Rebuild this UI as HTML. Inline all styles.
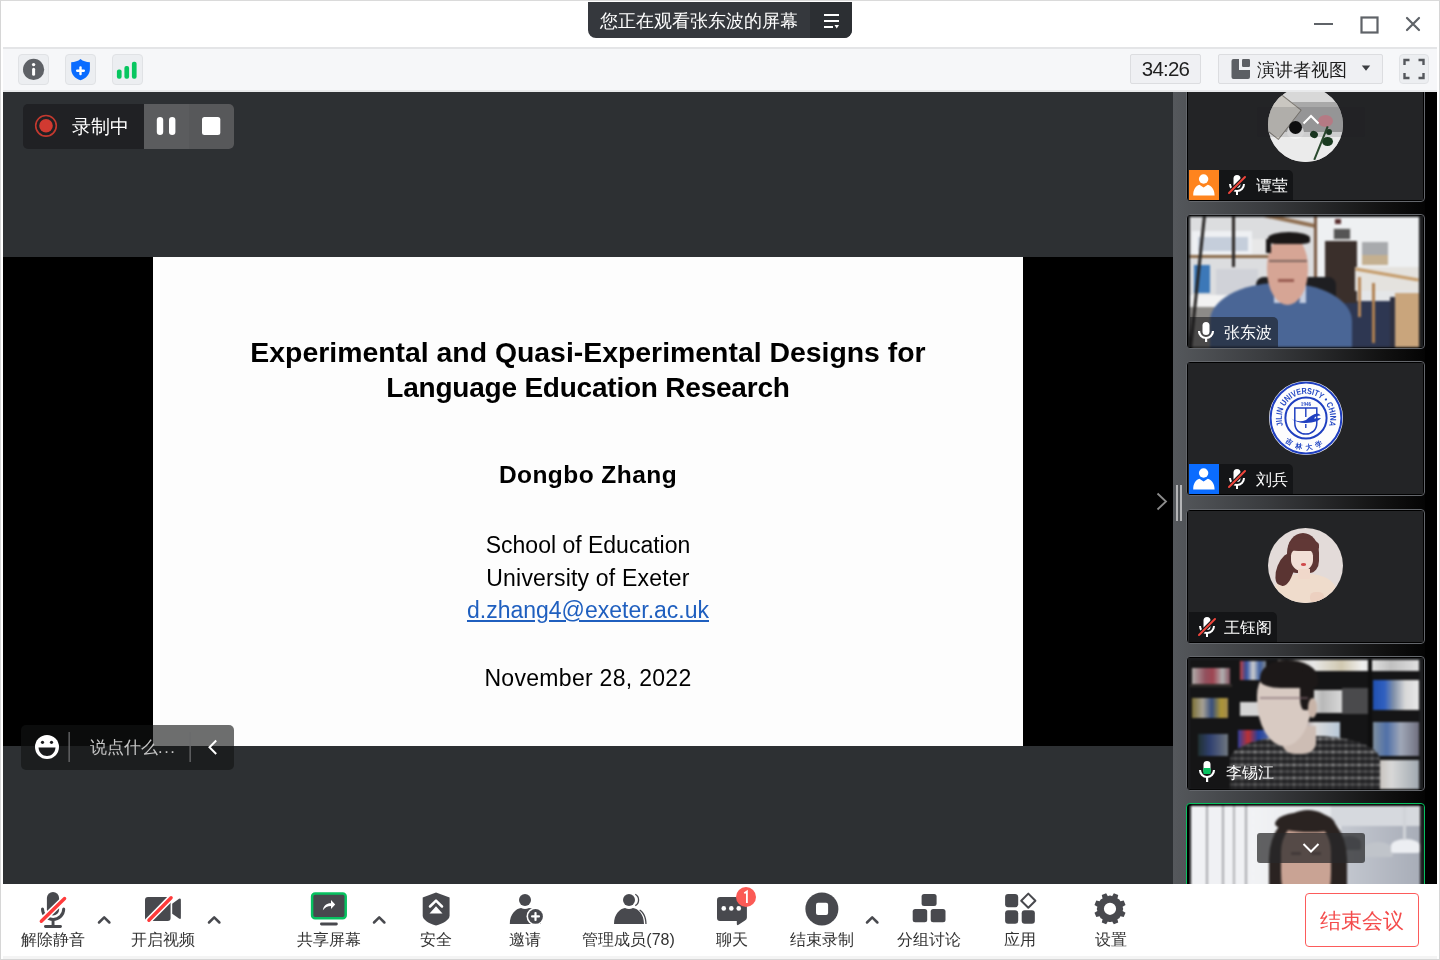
<!DOCTYPE html>
<html><head><meta charset="utf-8">
<style>
*{box-sizing:border-box;margin:0;padding:0}
html,body{width:1440px;height:960px;overflow:hidden;background:#fff;-webkit-font-smoothing:antialiased;font-family:"Liberation Sans",sans-serif}
.a{position:absolute}
#frame{position:absolute;left:0;top:0;width:1440px;height:960px;border:1px solid #d6d6d6;border-top-color:#dadada}
#titlebar{left:1px;top:1px;width:1438px;height:46px;background:#fff}
#pill{left:588px;top:2px;width:264px;height:36px;background:#35383d;border-radius:0 0 8px 8px;overflow:hidden}
#pill .txt{left:12px;top:8px;font-size:18px;color:#fff;line-height:22px;white-space:nowrap}
#pill .menu{left:222px;top:0;width:42px;height:36px;background:#2c2f33}
#sep1{left:3px;top:47px;width:1434px;height:2px;background:#e4e5e7}
#toolbar{left:3px;top:49px;width:1434px;height:42px;background:#f6f7f9}
#sep2{left:3px;top:90px;width:1434px;height:2px;background:#e8e9eb}
.tbtn{position:absolute;top:54px;width:31px;height:31px;background:#eceef1;border:1px solid #e0e2e5;border-radius:4px}
#main{left:3px;top:92px;width:1170px;height:792px;background:#2d3033}
#blackbar{left:3px;top:257px;width:1170px;height:489px;background:#000}
#slide{left:153px;top:257px;width:870px;height:489px;background:#fdfdfd;color:#000}
#slide .ln{position:absolute;left:0;width:870px;text-align:center;white-space:nowrap}
#sidebar{left:1173px;top:92px;width:264px;height:792px;background:linear-gradient(90deg,#55585c 0%,#3a3c3f 35%,#111 80%,#000 100%);overflow:hidden}
.tile{position:absolute;left:0;width:239px;height:135px;border:1px solid #64676c;border-radius:4px;background:#000;overflow:hidden}
.tile .in{position:absolute;left:1px;top:1px;width:235px;height:131px;background:#232426}
.vid{filter:blur(1.1px)}
.av{filter:blur(0.6px)}
.label{position:absolute;left:0;bottom:0;height:30px;background:#141517;border-radius:0 5px 0 0;color:#fff;font-size:16px;line-height:30px;white-space:nowrap}
#bottombar{left:3px;top:884px;width:1434px;height:72px;background:#fff}
#bsep{left:3px;top:956px;width:1434px;height:3px;background:#f4f4f4}
.blab{position:absolute;top:929.5px;font-size:16px;line-height:20px;color:#333;white-space:nowrap;text-align:center}
</style></head><body><div style="position:absolute;left:0;top:0;width:1440px;height:960px;will-change:transform">
<div id="frame"></div>
<div id="titlebar" class="a"></div>
<div id="pill" class="a">
  <div class="a txt">您正在观看张东波的屏幕</div>
  <div class="a menu">
    <svg class="a" style="left:0;top:0" width="42" height="36" viewBox="0 0 42 36">
      <rect x="14" y="12" width="15" height="2" fill="#fff"/>
      <rect x="14" y="18" width="15" height="2" fill="#fff"/>
      <rect x="14" y="24" width="9" height="2" fill="#fff"/>
      <path d="M24.5 23 L29 23 L26.75 26.5 Z" fill="#fff"/>
    </svg>
  </div>
</div>
<!-- window controls -->
<svg class="a" style="left:1310px;top:10px" width="120" height="30" viewBox="0 0 120 30">
  <rect x="4" y="13" width="19" height="2" fill="#5f6368"/>
  <rect x="51.5" y="7.5" width="16" height="15" fill="none" stroke="#5f6368" stroke-width="2.2"/>
  <path d="M97 8 L109 20 M109 8 L97 20" stroke="#5f6368" stroke-width="2.2" stroke-linecap="round"/>
</svg>
<div id="sep1" class="a"></div>
<div id="toolbar" class="a"></div>
<div id="sep2" class="a"></div>

<div class="tbtn" style="left:18px"></div>
<div class="tbtn" style="left:65px"></div>
<div class="tbtn" style="left:112px"></div>

<div id="main" class="a"></div>
<div id="blackbar" class="a"></div>
<div id="slide" class="a">
  <div class="ln" style="top:79px;font-size:28.4px;font-weight:bold">Experimental and Quasi-Experimental Designs for</div>
  <div class="ln" style="top:114.5px;font-size:28px;font-weight:bold;letter-spacing:-0.22px">Language Education Research</div>
  <div class="ln" style="top:203.5px;font-size:24.5px;font-weight:bold;letter-spacing:0.45px">Dongbo Zhang</div>
  <div class="ln" style="top:274.5px;font-size:23px">School of Education</div>
  <div class="ln" style="top:308px;font-size:23px;letter-spacing:0.2px">University of Exeter</div>
  <div class="ln" style="top:340px;font-size:23px;color:#1f5fbf;text-decoration:underline">d.zhang4@exeter.ac.uk</div>
  <div class="ln" style="top:408px;font-size:23px;letter-spacing:0.3px">November 28, 2022</div>
</div>



<!-- toolbar right -->
<div class="a" style="left:1130px;top:54px;width:71px;height:30px;background:#eff0f3;border:1px solid #dcdde0;border-radius:2px;font-size:20.5px;line-height:28px;text-align:center;color:#1f1f1f;letter-spacing:-0.8px">34:26</div>
<div class="a" style="left:1218px;top:54px;width:165px;height:30px;background:#eff0f3;border:1px solid #dcdde0;border-radius:2px"></div>
<svg class="a" style="left:1230px;top:58px" width="22" height="22" viewBox="0 0 22 22"><path d="M1.5 3 Q1.5 1 3.5 1 L9 1 L9 12 L20 12 L20 19 Q20 21 18 21 L3.5 21 Q1.5 21 1.5 19 Z" fill="#5c5f64"/><rect x="12" y="1" width="8" height="8" rx="1.2" fill="#5c5f64"/></svg>
<div class="a" style="left:1257px;top:57.5px;font-size:18.4px;line-height:24px;color:#1f1f1f;white-space:nowrap">演讲者视图</div>
<svg class="a" style="left:1360px;top:64px" width="12" height="8" viewBox="0 0 12 8"><path d="M1.8 1.5 L10.2 1.5 L6 6.8 Z" fill="#3c3e42"/></svg>
<div class="a" style="left:1399px;top:54px;width:30px;height:30px;background:#eceef1;border:1px solid #e0e2e5;border-radius:4px"></div>
<svg class="a" style="left:1399px;top:54px" width="30" height="30" viewBox="0 0 30 30"><path d="M5.5 11 L5.5 6 L10.5 6 M19.5 6 L24.5 6 L24.5 11 M24.5 19 L24.5 24 L19.5 24 M10.5 24 L5.5 24 L5.5 19" fill="none" stroke="#54575c" stroke-width="2.4"/></svg>
<!-- recording widget -->
<div class="a" style="left:23px;top:104px;width:211px;height:45px;border-radius:5px;overflow:hidden;background:#202124">
  <div class="a" style="left:121px;top:0;width:45px;height:45px;background:#5b5c5e"></div>
  <div class="a" style="left:166px;top:0;width:45px;height:45px;background:#57585a"></div>
  <svg class="a" style="left:0;top:0" width="211" height="45" viewBox="0 0 211 45">
    <circle cx="23" cy="21.8" r="10.3" fill="none" stroke="#c3392f" stroke-width="1.6"/>
    <circle cx="23" cy="21.8" r="6.8" fill="#d13a31"/>
    <rect x="133.8" y="12.9" width="6.4" height="18.1" rx="3.2" fill="#fff"/>
    <rect x="146" y="12.9" width="6.4" height="18.1" rx="3.2" fill="#fff"/>
    <rect x="179" y="13" width="18.3" height="18" rx="2.5" fill="#fff"/>
  </svg>
  <div class="a" style="left:49px;top:12px;font-size:18.8px;line-height:22px;color:#fff;white-space:nowrap">录制中</div>
</div>
<!-- chat input widget -->
<div class="a" style="left:21px;top:725px;width:213px;height:45px;border-radius:5px;background:rgba(18,19,20,.61)">
  <svg class="a" style="left:0;top:0" width="213" height="45" viewBox="0 0 213 45">
    <circle cx="26" cy="22" r="12" fill="#fff"/>
    <circle cx="21.5" cy="17.3" r="1.6" fill="#1a1b1d"/>
    <circle cx="30.5" cy="17.3" r="1.6" fill="#1a1b1d"/>
    <path d="M17.5 22.5 L34.5 22.5 C34 28 30.5 31 26 31 C21.5 31 18 28 17.5 22.5 Z" fill="#1a1b1d"/>
    <rect x="47.5" y="7" width="1.3" height="30" fill="#6a6b6d"/>
    <rect x="168.5" y="7" width="1.3" height="30" fill="#6a6b6d"/>
    <path d="M195.2 15.5 L188.5 22.3 L195.2 29" fill="none" stroke="#fff" stroke-width="2"/>
  </svg>
  <div class="a" style="left:69px;top:11px;font-size:16.5px;line-height:22px;color:#c6c6c6;white-space:nowrap">说点什么<span style="letter-spacing:1.6px">...</span></div>
</div>
<svg class="a" style="left:1150px;top:488px;z-index:2" width="22" height="26" viewBox="0 0 22 26"><path d="M7.5 5.5 L16 13.5 L7.5 21.5" fill="none" stroke="#8c8c8c" stroke-width="1.8"/></svg>
<div id="sidebar" class="a">
  <!-- splitter -->
  <div class="a" style="left:3px;top:393px;width:2px;height:36px;background:#b4b5b7"></div>
  <div class="a" style="left:7px;top:393px;width:2px;height:36px;background:#b4b5b7"></div>
  <!-- right scrollbar strip -->
  <div class="a" style="left:252px;top:0;width:12px;height:792px;background:#000"></div>
  </div>
<div id="tiles" class="a" style="left:1186px;top:0;width:239px;height:884px;overflow:hidden;clip-path:inset(92px 0 0 0)">
  <!-- tile1 -->
  <div class="tile" style="top:67px">
    <div class="in">
      <div class="a av" style="left:80px;top:18px;width:75px;height:75px;border-radius:50%;overflow:hidden;background:#d4d4d4">
        <div class="a" style="left:0;top:0;width:75px;height:15px;background:#d8d8d8"></div>
        <div class="a" style="left:0;top:15px;width:75px;height:30px;background:#a9a9a9"></div>
        <div class="a" style="left:0;top:45px;width:75px;height:30px;background:#ebebeb"></div>
        <div class="a" style="left:-10px;top:8px;width:36px;height:38px;background:#c9c6c0;transform:rotate(38deg);border:1px solid #7e7a74"></div>
        <div class="a" style="left:19px;top:38px;width:17px;height:14px;border-radius:50%;background:#f4f4f4"></div>
        <div class="a" style="left:21px;top:34px;width:13px;height:13px;border-radius:50%;background:#0c0c0c"></div>
        <div class="a" style="left:50px;top:28px;width:15px;height:12px;border-radius:50%;background:#cf8a94"></div>
        <div class="a" style="left:42px;top:44px;width:8px;height:7px;border-radius:50%;background:#1a3a20;transform:rotate(30deg)"></div>
        <div class="a" style="left:54px;top:50px;width:11px;height:9px;border-radius:50%;background:#1a3a20"></div>
        <div class="a" style="left:58px;top:42px;width:6px;height:6px;border-radius:50%;background:#1a3a20"></div>
        <div class="a" style="left:52px;top:38px;width:1.5px;height:36px;background:#2b4a2e;transform:rotate(22deg)"></div>
      </div>
    </div>
  </div>
  <!-- tile2 -->
  <div class="tile" style="top:214px">
    <div class="in" style="background:#1c1d1f">
      <div class="a vid" style="left:2px;top:1px;width:229px;height:130px;background:#e4e6e8;overflow:hidden">
        <div class="a" style="left:0;top:0;width:128px;height:130px;background:#dcdddf"></div>
        <div class="a" style="left:2px;top:14px;width:60px;height:26px;background:#eef0f3"></div>
        <div class="a" style="left:8px;top:20px;width:50px;height:14px;background:#c5cedb"></div>
        <div class="a" style="left:62px;top:22px;width:22px;height:16px;background:#e8e8e8"></div>
        <div class="a" style="left:0;top:38px;width:82px;height:3px;background:#8a6a4a"></div>
        <div class="a" style="left:38px;top:-2px;width:90px;height:4px;background:#8f6e50;transform:rotate(12deg)"></div>
        <div class="a" style="left:42px;top:0;width:3px;height:50px;background:#2a2624"></div>
        <div class="a" style="left:4px;top:48px;width:16px;height:28px;background:#3c78b8"></div>
        <div class="a" style="left:26px;top:52px;width:42px;height:30px;background:#d0d2d8"></div>
        <div class="a" style="left:0;top:78px;width:40px;height:14px;background:#f2f2f2"></div>
        <div class="a" style="left:0;top:90px;width:50px;height:40px;background:#8d8b88"></div>
        <div class="a" style="left:6px;top:0;width:3px;height:130px;background:#252322;transform:skewX(-6deg)"></div>
        <div class="a" style="left:126px;top:0;width:103px;height:62px;background:#eef0f2"></div>
        <div class="a" style="left:124px;top:0;width:3px;height:62px;background:#7a5a44"></div>
        <div class="a" style="left:130px;top:84px;width:75px;height:46px;background:#2e3752"></div>
        <div class="a" style="left:135px;top:24px;width:32px;height:62px;background:#3a2f2b"></div>
        <div class="a" style="left:143px;top:11px;width:18px;height:12px;background:#555;border:1px solid #ddd"></div>
        <div class="a" style="left:145px;top:2px;width:6px;height:5px;background:#5a3030"></div>
        <div class="a" style="left:172px;top:25px;width:26px;height:16px;background:#a8aaad"></div>
        <div class="a" style="left:172px;top:38px;width:26px;height:10px;background:#c4b090"></div>
        <div class="a" style="left:165px;top:50px;width:64px;height:24px;background:#e4e2de"></div>
        <div class="a" style="left:165px;top:56px;width:64px;height:3px;background:#c49a68;transform:rotate(10deg)"></div>
        <div class="a" style="left:168px;top:60px;width:3px;height:40px;background:#b8885a"></div>
        <div class="a" style="left:182px;top:66px;width:3px;height:60px;background:#b08050"></div>
        <div class="a" style="left:205px;top:76px;width:24px;height:54px;background:#c9a57c"></div>
        <div class="a" style="left:200px;top:80px;width:5px;height:50px;background:#2e3040"></div>
        <div class="a" style="left:66px;top:60px;width:80px;height:28px;background:#1e1e21;border-radius:8px"></div>
        <div class="a" style="left:20px;top:66px;width:142px;height:100px;background:#4a6696;border-radius:48% 48% 0 0 / 38% 38% 0 0"></div>
        <div class="a" style="left:84px;top:66px;width:32px;height:20px;background:#c4cde0"></div>
        <div class="a" style="left:90px;top:70px;width:20px;height:24px;background:#4a6696;border-radius:0 0 50% 50%"></div>
        <div class="a" style="left:77px;top:18px;width:41px;height:70px;background:#d6a595;border-radius:46% 46% 50% 50%"></div>
        <div class="a" style="left:78px;top:15px;width:42px;height:12px;background:#1a1717;border-radius:50% 50% 20% 20%"></div>
        <div class="a" style="left:76px;top:22px;width:5px;height:14px;background:#1a1717"></div>
        <div class="a" style="left:79px;top:43px;width:38px;height:2px;background:#5a4a48;opacity:.7"></div>
        <div class="a" style="left:88px;top:62px;width:16px;height:3px;background:#8a4a40;opacity:.8"></div>
      </div>
      <div class="label" style="left:2px;bottom:0;width:88px;background:rgba(20,20,22,.55)">
        <svg class="a" style="left:6px;top:4px" width="20" height="22" viewBox="0 0 20 22"><rect x="6.5" y="1" width="7" height="13" rx="3.5" fill="#fff"/><path d="M3 10 A7 7 0 0 0 17 10" fill="none" stroke="#fff" stroke-width="2.2"/><rect x="9" y="16" width="2.2" height="5" fill="#fff"/></svg>
        <span class="a" style="left:34px;top:1px">张东波</span>
      </div>
    </div>
  </div>
  <!-- tile3 -->
  <div class="tile" style="top:361px">
    <div class="in">
      <svg class="a" style="left:80px;top:17px" width="76" height="76" viewBox="0 0 76 76">
        <defs>
          <path id="arcT" d="M14.98 45.48 A24.2 24.2 0 1 1 61.02 45.48"/>
          <path id="arcB" d="M12.5 56 A31 31 0 0 0 63.5 56"/>
        </defs>
        <circle cx="38" cy="38" r="37" fill="#fdfdfd"/>
        <circle cx="38" cy="38" r="35.4" fill="none" stroke="#1f3fc0" stroke-width="2"/>
        <circle cx="38" cy="38" r="20.6" fill="none" stroke="#1f3fc0" stroke-width="2"/>
        <text font-family="Liberation Sans" font-weight="bold" font-size="8.6" fill="#2347c4"><textPath href="#arcT" textLength="91.2" lengthAdjust="spacingAndGlyphs">JILIN UNIVERSITY • CHINA</textPath></text>
        <text font-size="7" font-weight="bold" fill="#2347c4"><textPath href="#arcB" startOffset="50%" text-anchor="middle" letter-spacing="4">吉林大学</textPath></text>
        <text x="38" y="26" font-family="Liberation Serif" font-weight="bold" font-size="5.2" text-anchor="middle" fill="#2347c4">1946</text>
        <path d="M26.8 28 L48.8 28 L48.8 43 C48.8 50 44 54 37.8 54 C31.6 54 26.8 50 26.8 43 Z" fill="none" stroke="#1f3fc0" stroke-width="1.5"/>
        <path d="M37.8 28 L37.8 37 M37.8 44 L37.8 48" stroke="#1f3fc0" stroke-width="1.4"/>
        <path d="M23 38.5 C28 41.5 33 42 38 40 C42 36.5 45 34 49 33.5 C51 33.5 52 34.5 52.5 35.5 C49 35.5 47 36.5 46 38.5 L53 38 C51 41 46 42.5 38 43 C32 43.2 27 41.5 23 38.5 Z" fill="#1f3fc0"/>
      </svg>
      <div class="label" style="left:1px;width:104px">
        <div class="a" style="left:0;top:0;width:30px;height:30px;background:#0a6cff"></div>
        <svg class="a" style="left:0;top:0" width="30" height="30" viewBox="0 0 30 30"><circle cx="14.6" cy="9" r="4.7" fill="#fff"/><path d="M4.2 25.4 L25.6 25.4 C25.6 19.5 22.5 15.8 18.8 14.8 L14.6 17.6 L10.4 14.8 C6.8 15.8 4.2 19.5 4.2 25.4 Z" fill="#fff"/></svg>
        <svg class="a" style="left:37px;top:4px" width="22" height="22" viewBox="0 0 22 22"><rect x="7.5" y="1" width="7" height="13" rx="3.5" fill="#fff"/><path d="M4 10 A7 7 0 0 0 18 10" fill="none" stroke="#fff" stroke-width="2"/><rect x="10" y="16" width="2" height="5" fill="#fff"/><path d="M2.5 19.5 L19.5 2.5" stroke="#141517" stroke-width="4"/><path d="M3 19 L19 3" stroke="#f0453c" stroke-width="2" stroke-linecap="round"/></svg>
        <span class="a" style="left:67px;top:1px">刘兵</span>
      </div>
    </div>
  </div>
  <!-- tile4 -->
  <div class="tile" style="top:509px">
    <div class="in">
      <div class="a av" style="left:80px;top:17px;width:75px;height:75px;border-radius:50%;overflow:hidden;background:#e3dbd9">
        <div class="a" style="left:6px;top:46px;width:62px;height:40px;background:#efdccc;border-radius:45% 45% 0 0 / 40% 40% 0 0"></div>
        <div class="a" style="left:19px;top:5px;width:32px;height:40px;background:#5e3634;border-radius:50% 50% 30% 30%"></div>
        <div class="a" style="left:9px;top:24px;width:17px;height:34px;background:#5a3432;border-radius:60% 20% 40% 60%;transform:rotate(22deg)"></div>
        <div class="a" style="left:23px;top:21px;width:22px;height:22px;background:#f2dfd6;border-radius:30% 30% 50% 50%"></div>
        <div class="a" style="left:21px;top:11px;width:30px;height:12px;background:#613836;border-radius:40% 50% 30% 30%"></div>
        <div class="a" style="left:33px;top:35px;width:5px;height:2.5px;background:#d04a4c;border-radius:50%"></div>
        <div class="a" style="left:30px;top:41px;width:12px;height:10px;background:#f0d8ca"></div>
        <div class="a" style="left:42px;top:64px;width:14px;height:11px;background:#ecd0c0;border-radius:40%"></div>
      </div>
      <div class="label" style="left:1px;width:88px">
        <svg class="a" style="left:7px;top:4px" width="22" height="22" viewBox="0 0 22 22"><rect x="7.5" y="1" width="7" height="13" rx="3.5" fill="#fff"/><path d="M4 10 A7 7 0 0 0 18 10" fill="none" stroke="#fff" stroke-width="2"/><rect x="10" y="16" width="2" height="5" fill="#fff"/><path d="M2.5 19.5 L19.5 2.5" stroke="#141517" stroke-width="4"/><path d="M3 19 L19 3" stroke="#f0453c" stroke-width="2" stroke-linecap="round"/></svg>
        <span class="a" style="left:35px;top:1px">王钰阁</span>
      </div>
    </div>
  </div>
  <!-- tile5 -->
  <div class="tile" style="top:656px">
    <div class="in" style="background:#1c1d1f">
      <div class="a vid" style="left:2px;top:2px;width:229px;height:129px;background:#151516;overflow:hidden">
        <div class="a" style="left:2px;top:8px;width:38px;height:17px;opacity:.8;background:linear-gradient(90deg,#d8d4d0,#b06070 35%,#c05060 55%,#d8d8d8 80%,#a06070)"></div>
        <div class="a" style="left:0;top:24px;width:42px;height:3px;background:#302c2a"></div>
        <div class="a" style="left:50px;top:1px;width:26px;height:19px;background:linear-gradient(90deg,#c04040,#3050a0 25%,#d0d0d0 50%,#4060a0 75%,#808890)"></div>
        <div class="a" style="left:88px;top:0;width:141px;height:11px;background:linear-gradient(90deg,#b8b0a8,#e8e8e8 25%,#d0c8b0 45%,#f0f0f0 60%,#c0c0c0 80%,#e0e0e0)"></div>
        <div class="a" style="left:2px;top:38px;width:36px;height:20px;opacity:.75;background:linear-gradient(90deg,#a09040,#d8d0c0 30%,#4060a0 55%,#e0c040 80%,#d0b060)"></div>
        <div class="a" style="left:50px;top:42px;width:22px;height:14px;background:#d4d4d4"></div>
        <div class="a" style="left:48px;top:70px;width:34px;height:25px;background:linear-gradient(90deg,#3040a0,#c03030 30%,#2040a0 60%,#6070a0)"></div>
        <div class="a" style="left:8px;top:74px;width:30px;height:22px;background:linear-gradient(90deg,#203030,#304070 40%,#707880)"></div>
        <div class="a" style="left:102px;top:30px;width:50px;height:23px;background:linear-gradient(90deg,#e0e0e0,#f0f0f0 30%,#b8b8b8 60%,#d8d8d8)"></div>
        <div class="a" style="left:152px;top:28px;width:26px;height:26px;background:#4a4a4c"></div>
        <div class="a" style="left:183px;top:20px;width:46px;height:30px;background:linear-gradient(90deg,#2050b0,#3060c0 25%,#8090a8 45%,#d8d8d8 70%,#e8e8e8)"></div>
        <div class="a" style="left:108px;top:62px;width:42px;height:32px;background:linear-gradient(90deg,#907070,#dcdcdc 40%,#b8c8d8)"></div>
        <div class="a" style="left:183px;top:62px;width:46px;height:34px;background:linear-gradient(90deg,#8090a0,#5070a8 30%,#a0a8b8 60%,#707080)"></div>
        <div class="a" style="left:183px;top:100px;width:46px;height:29px;background:linear-gradient(90deg,#c0b8b0,#d8d8d8 40%,#a0a8b0)"></div>
        <div class="a" style="left:178px;top:0;width:4px;height:129px;background:#0e0e0e"></div>
        <div class="a" style="left:40px;top:76px;width:150px;height:80px;border-radius:45% 45% 0 0 / 30% 30% 0 0;background:repeating-linear-gradient(90deg,#262628 0 5px,#9a9a9a 5px 6.5px),#333"></div>
        <div class="a" style="left:40px;top:76px;width:150px;height:80px;border-radius:45% 45% 0 0 / 30% 30% 0 0;background:repeating-linear-gradient(0deg,rgba(38,38,40,.85) 0 5px,rgba(180,180,180,.45) 5px 6.5px)"></div>
        <div class="a" style="left:92px;top:66px;width:34px;height:28px;background:#cdbdb4;border-radius:0 0 40% 40%"></div>
        <div class="a" style="left:67px;top:8px;width:55px;height:78px;background:#d8cac2;border-radius:40% 46% 50% 50% / 35% 40% 60% 60%"></div>
        <div class="a" style="left:70px;top:0;width:58px;height:28px;background:#1c1818;border-radius:50% 60% 10% 40% / 70% 70% 20% 30%"></div>
        <div class="a" style="left:110px;top:10px;width:14px;height:40px;background:#1c1818;border-radius:30% 50% 30% 30%"></div>
        <div class="a" style="left:118px;top:38px;width:9px;height:20px;background:#c8b4a8;border-radius:50%"></div>
        <div class="a" style="left:70px;top:37px;width:48px;height:2px;background:#806870;opacity:.6"></div>
      </div>
      <div class="label" style="left:2px;bottom:2px;width:86px;background:transparent">
        <svg class="a" style="left:6px;top:3px" width="22" height="24" viewBox="0 0 22 24"><rect x="7.5" y="1" width="7" height="13" rx="3.5" fill="#fff"/><rect x="7.5" y="8" width="7" height="6" fill="#07c160"/><rect x="7.5" y="8" width="7" height="6" rx="3" fill="#07c160"/><path d="M4 10 A7 7 0 0 0 18 10" fill="none" stroke="#fff" stroke-width="2.2"/><rect x="10" y="17" width="2.2" height="5" fill="#fff"/></svg>
        <span class="a" style="left:36px;top:1px">李锡江</span>
      </div>
    </div>
  </div>
  <!-- tile6 -->
  <div class="tile" style="top:803px;border:1.5px solid #07c160">
    <div class="in" style="left:1.5px;top:1.5px;background:#1c1d1f">
      <div class="a vid" style="left:2px;top:0.5px;width:229px;height:129px;background:#e4e6ea;overflow:hidden">
        <div class="a" style="left:0;top:0;width:65px;height:129px;background:#f0f1f4"></div>
        <div class="a" style="left:15px;top:0;width:2px;height:129px;background:#a8a9ad"></div>
        <div class="a" style="left:31px;top:0;width:2px;height:129px;background:#a8a9ad"></div>
        <div class="a" style="left:42px;top:0;width:2px;height:129px;background:#b0b1b5"></div>
        <div class="a" style="left:54px;top:0;width:2px;height:129px;background:#a8a9ad"></div>
        <div class="a" style="left:60px;top:0;width:90px;height:129px;background:linear-gradient(90deg,#f2f3f5,#e4e6ea)"></div>
        <div class="a" style="left:140px;top:0;width:89px;height:20px;background:#d6d9de"></div>
        <div class="a" style="left:150px;top:20px;width:79px;height:109px;background:linear-gradient(90deg,#c4c8d0,#a8adb8)"></div>
        <div class="a" style="left:172px;top:36px;width:30px;height:15px;background:#c0c4ca;border-radius:50% 50% 10% 10%"></div>
        <div class="a" style="left:200px;top:33px;width:29px;height:14px;background:#eceef2;border-radius:50% 50% 10% 10%"></div>
        <div class="a" style="left:212px;top:0;width:3px;height:34px;background:#d0d3d8"></div>
        <div class="a" style="left:146px;top:30px;width:24px;height:14px;background:#8a8e96;border-radius:50% 50% 10% 10%"></div>
        <div class="a" style="left:78px;top:4px;width:78px;height:140px;background:#2a2321;border-radius:50% 50% 35% 35% / 35% 35% 30% 30%"></div>
        <div class="a" style="left:90px;top:16px;width:50px;height:100px;background:#c9a394;border-radius:45% 45% 45% 45% / 30% 30% 50% 50%"></div>
        <div class="a" style="left:84px;top:6px;width:60px;height:20px;background:#2a2321;border-radius:50% 50% 30% 60% / 60% 60% 40% 40%"></div>
        <div class="a" style="left:100px;top:46px;width:10px;height:3px;background:#5a4040;opacity:.6"></div>
        <div class="a" style="left:120px;top:46px;width:10px;height:3px;background:#5a4040;opacity:.6"></div>
      </div>
    </div>
  </div>
  <!-- scroll overlays -->
  <div class="a" style="left:71px;top:107px;width:108px;height:30px;background:rgba(30,30,32,.14);border-radius:3px"></div>
  <svg class="a" style="left:116px;top:114px" width="18" height="12" viewBox="0 0 18 12"><path d="M1.5 9.5 L9 2 L16.5 9.5" fill="none" stroke="#fff" stroke-width="2"/></svg>
  <div class="a" style="left:71px;top:833px;width:108px;height:30px;background:rgba(40,40,42,.72);border-radius:3px"></div>
  <svg class="a" style="left:116px;top:841px" width="18" height="14" viewBox="0 0 18 14"><path d="M1.5 3 L9 10.5 L16.5 3" fill="none" stroke="#fff" stroke-width="2"/></svg>
  <!-- tile1 label -->
  <div class="label" style="left:3px;top:170px;bottom:auto;width:104px">
    <div class="a" style="left:0;top:0;width:30px;height:30px;background:#fe841e"></div>
    <svg class="a" style="left:0;top:0" width="30" height="30" viewBox="0 0 30 30"><circle cx="14.6" cy="9" r="4.7" fill="#fff"/><path d="M4.2 25.4 L25.6 25.4 C25.6 19.5 22.5 15.8 18.8 14.8 L14.6 17.6 L10.4 14.8 C6.8 15.8 4.2 19.5 4.2 25.4 Z" fill="#fff"/></svg>
    <svg class="a" style="left:37px;top:4px" width="22" height="22" viewBox="0 0 22 22"><rect x="7.5" y="1" width="7" height="13" rx="3.5" fill="#fff"/><path d="M4 10 A7 7 0 0 0 18 10" fill="none" stroke="#fff" stroke-width="2"/><rect x="10" y="16" width="2" height="5" fill="#fff"/><path d="M2.5 19.5 L19.5 2.5" stroke="#141517" stroke-width="4"/><path d="M3 19 L19 3" stroke="#f0453c" stroke-width="2" stroke-linecap="round"/></svg>
    <span class="a" style="left:67px;top:1px">谭莹</span>
  </div>
</div>


<div id="bottombar" class="a"></div>
<div id="bsep" class="a"></div>

<svg class="a" style="left:0;top:0" width="1440" height="960" viewBox="0 0 1440 960">
  <!-- toolbar icons -->
  <circle cx="33.6" cy="69.4" r="10.6" fill="#5e6166"/>
  <circle cx="33.6" cy="64.6" r="1.7" fill="#fff"/>
  <rect x="32.1" y="67.8" width="3" height="8" rx="1.5" fill="#fff"/>
  <path d="M80.5 59 C78 61.2 75 62 71.2 62.2 L71.2 69 C71.2 74.5 75 78.5 80.5 80.3 C86 78.5 89.9 74.5 89.9 69 L89.9 62.2 C86 62 83 61.2 80.5 59 Z" fill="#0a6cff"/>
  <rect x="76" y="69.5" width="9" height="2.4" rx="1.1" fill="#fff"/>
  <rect x="79.3" y="66.3" width="2.4" height="9" rx="1.1" fill="#fff"/>
  <rect x="116.9" y="69.4" width="4.7" height="9.4" rx="2" fill="#07c65f"/>
  <rect x="124.4" y="66" width="4.7" height="12.8" rx="2" fill="#07c65f"/>
  <rect x="131.9" y="61.7" width="4.7" height="17.1" rx="2" fill="#07c65f"/>
  <!-- bottom bar icons -->
  <g fill="#48494e">
    <rect x="46.9" y="891.9" width="12.2" height="23.7" rx="6.1"/>
    <path d="M42.5 909 A10.6 10.4 0 0 0 63.7 909" fill="none" stroke="#48494e" stroke-width="3" stroke-linecap="round"/>
    <rect x="51.6" y="919" width="2.9" height="7"/>
    <rect x="44" y="925" width="17.9" height="2.9" rx="1.4"/>
  </g>
  <path d="M40.3 922.2 L65.6 897.5" stroke="#fff" stroke-width="6.5" stroke-linecap="round"/>
  <path d="M41.3 921.2 L64.6 898.5" stroke="#ff3b3b" stroke-width="3.4" stroke-linecap="round"/>
  <g fill="#48494e">
    <rect x="145" y="896.9" width="25.6" height="24" rx="3"/>
    <path d="M172.2 903.7 L179 898.8 Q180.9 897.8 180.9 900 L180.9 917.4 Q180.9 919.6 179 918.6 L172.2 913.8 Z"/>
  </g>
  <path d="M148.1 921 L171.9 896.9" stroke="#fff" stroke-width="6.5" stroke-linecap="round"/>
  <path d="M148.9 920.2 L171.1 897.7" stroke="#ff3b3b" stroke-width="3.4" stroke-linecap="round"/>
  <g fill="none" stroke="#48494e" stroke-width="2.5" stroke-linecap="round" stroke-linejoin="round">
    <path d="M99 922.5 L104.2 917.3 L109.4 922.5"/>
    <path d="M209 922.5 L214.2 917.3 L219.4 922.5"/>
    <path d="M374 922.5 L379.2 917.3 L384.4 922.5"/>
    <path d="M867 922.5 L872.2 917.3 L877.4 922.5"/>
  </g>
  <rect x="312.1" y="893.4" width="33.6" height="24.8" rx="3" fill="#48494e" stroke="#07c160" stroke-width="2.5"/>
  <rect x="320" y="922.5" width="17.8" height="2.9" rx="1.4" fill="#48494e"/>
  <path d="M322.8 910.3 C323.5 905.5 327 903 331 903.2 L331 900 L335.2 904.5 L331 909 L331 906 C327.5 906 325 907.5 322.8 910.3 Z" fill="#fff"/>
  <path d="M436 892.4 L449.6 897.4 L449.6 915.5 C449.6 920 443 923.5 436 925.5 C429 923.5 422.7 920 422.7 915.5 L422.7 897.4 Z" fill="#48494e"/>
  <path d="M430 906.5 L436 900.6 L442 906.5" fill="none" stroke="#fff" stroke-width="2.5" stroke-linecap="round" stroke-linejoin="round"/>
  <path d="M429.5 913.6 L436 906.3 L442.5 913.6 Z" fill="#fff"/>
  <g fill="#48494e">
    <circle cx="525" cy="900" r="6"/>
    <path d="M509.8 923.9 C509.8 914 516 908.5 521 908 Q525 909.8 529 908 C534 908.6 539 912 541 917 L541 923.9 Z"/>
  </g>
  <circle cx="535.5" cy="916.4" r="9" fill="#fff"/>
  <circle cx="535.5" cy="916.4" r="7.4" fill="#48494e"/>
  <rect x="531" y="915.3" width="9" height="2.2" rx="1" fill="#fff"/>
  <rect x="534.4" y="911.9" width="2.2" height="9" rx="1" fill="#fff"/>
  <g fill="#48494e">
    <path d="M635.3 894.2 A6.6 6.6 0 0 1 635.3 905.6" fill="none" stroke="#48494e" stroke-width="1.3"/>
    <path d="M640 909.5 C644 912 646.6 917 646.6 923.9 L645.3 923.9 C645.3 917.5 643 913 639.3 910.5 Z"/>
    <circle cx="629" cy="900" r="6"/>
    <path d="M614 923.9 C614 914 620 908.5 625 908 Q629 909.8 633 908 C638 908.5 644 914 644 923.9 Z"/>
  </g>
  <path d="M720 897 L744 897 Q746.9 897 746.9 900 L746.9 917.5 Q746.9 919.5 745 920.6 L738.5 924.8 Q736.8 925.8 736.8 923.8 L736.8 920.9 L720 920.9 Q717 920.9 717 918 L717 900 Q717 897 720 897 Z" fill="#48494e"/>
  <circle cx="723.75" cy="908.4" r="2.3" fill="#fff"/>
  <circle cx="731.3" cy="908.4" r="2.3" fill="#fff"/>
  <circle cx="738.75" cy="908.4" r="2.3" fill="#fff"/>
  <circle cx="746" cy="897" r="10" fill="#fb5a55"/>
  <path d="M744.3 893.2 L746.9 891.4 L746.9 903" fill="none" stroke="#fff" stroke-width="1.8"/>
  <circle cx="821.9" cy="908.9" r="16.5" fill="#48494e"/>
  <rect x="816" y="902.8" width="12.1" height="12.2" rx="2" fill="#fff"/>
  <g fill="#48494e">
    <rect x="921.6" y="893.9" width="15" height="12" rx="2.5"/>
    <rect x="912.7" y="909.1" width="14.5" height="13.2" rx="2.5"/>
    <rect x="930.7" y="909.1" width="14.8" height="13.2" rx="2.5"/>
    <rect x="1005.1" y="893.9" width="13.1" height="13.4" rx="3"/>
    <rect x="1005.1" y="910.3" width="13.1" height="13.4" rx="3"/>
    <rect x="1021.7" y="910.3" width="13.15" height="13.4" rx="3"/>
  </g>
  <path d="M1028.3 893.6 L1035.4 900.7 L1028.3 907.8 L1021.2 900.7 Z" fill="none" stroke="#48494e" stroke-width="2" stroke-linejoin="round"/>
  <path fill="#48494e" fill-rule="evenodd" d="M1122.62 906.69 L1125.52 904.93 L1123.71 900.56 L1120.42 901.37 A4.5 4.5 0 0 0 1117.43 898.38 L1118.24 895.09 L1113.87 893.28 L1112.11 896.18 A4.5 4.5 0 0 0 1107.89 896.18 L1106.13 893.28 L1101.76 895.09 L1102.57 898.38 A4.5 4.5 0 0 0 1099.58 901.37 L1096.29 900.56 L1094.48 904.93 L1097.38 906.69 A4.5 4.5 0 0 0 1097.38 910.91 L1094.48 912.67 L1096.29 917.04 L1099.58 916.23 A4.5 4.5 0 0 0 1102.57 919.22 L1101.76 922.51 L1106.13 924.32 L1107.89 921.42 A4.5 4.5 0 0 0 1112.11 921.42 L1113.87 924.32 L1118.24 922.51 L1117.43 919.22 A4.5 4.5 0 0 0 1120.42 916.23 L1123.71 917.04 L1125.52 912.67 L1122.62 910.91 A4.5 4.5 0 0 0 1122.62 906.69 Z M1116.1 908.8 A6.1 6.1 0 1 0 1103.9 908.8 A6.1 6.1 0 1 0 1116.1 908.8 Z"/>
</svg>

<div class="blab" style="left:12.6px;width:80px">解除静音</div>
<div class="blab" style="left:122.9px;width:80px">开启视频</div>
<div class="blab" style="left:288.75px;width:80px">共享屏幕</div>
<div class="blab" style="left:396px;width:80px">安全</div>
<div class="blab" style="left:485px;width:80px">邀请</div>
<div class="blab" style="left:568.6px;width:120px">管理成员(78)</div>
<div class="blab" style="left:691.85px;width:80px">聊天</div>
<div class="blab" style="left:781.65px;width:80px">结束录制</div>
<div class="blab" style="left:889px;width:80px">分组讨论</div>
<div class="blab" style="left:979.5px;width:80px">应用</div>
<div class="blab" style="left:1071px;width:80px">设置</div>
<div class="a" style="left:1305px;top:893px;width:114px;height:54px;border:1px solid #fc5b5b;border-radius:4px;color:#f44b4b;font-size:20.8px;line-height:53px;text-align:center">结束会议</div>
</div></body></html>
